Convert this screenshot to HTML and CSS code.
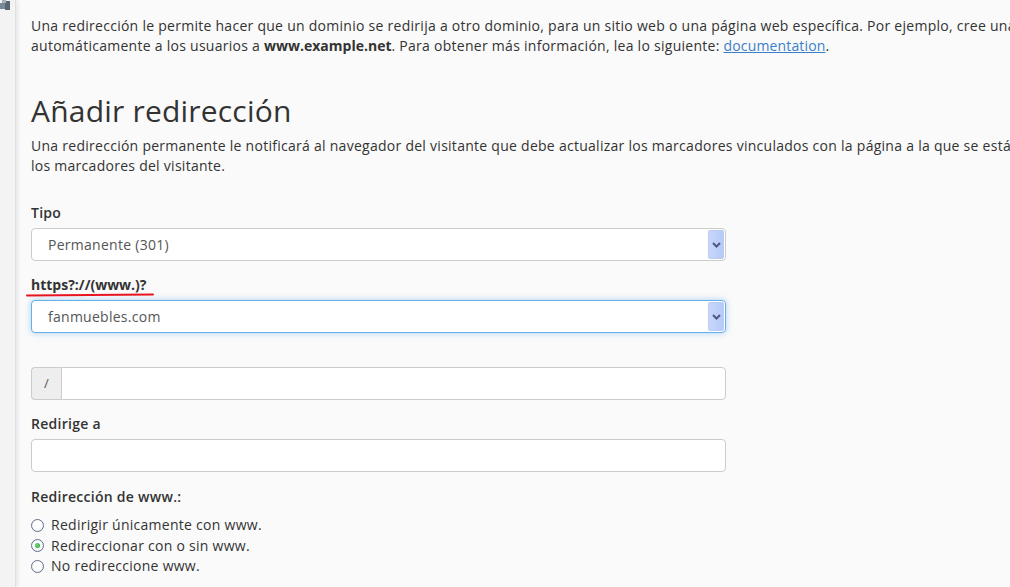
FILE: index.html
```html
<!DOCTYPE html>
<html lang="es">
<head>
<meta charset="utf-8">
<title>Añadir redirección</title>
<link rel="stylesheet" href="styles.css">
</head>
<body>
<div class="layout">
  <aside class="sidebar">
    <svg class="side-icon" width="12" height="12" viewBox="0 0 12 12"><rect x="0" y="3" width="5" height="6" fill="#7b8a99"/><rect x="5" y="1" width="5" height="9" fill="#5b6673"/><rect x="2" y="0" width="4" height="3" fill="#a4b0bc"/></svg>
  </aside>
  <main class="content">
    <p class="intro">Una redirección le permite hacer que un dominio se redirija a otro dominio, para un sitio web o una página web específica. Por ejemplo, cree una redirección para que www.example.com redirija<br>automáticamente a los usuarios a <b>www.example.net</b>. Para obtener más información, lea lo siguiente: <a href="#">documentation</a>.</p>

    <h2 class="title">Añadir redirección</h2>
    <p class="desc">Una redirección permanente le notificará al navegador del visitante que debe actualizar los marcadores vinculados con la página a la que se está redirigiendo. Una redirección temporal no actualizará<br>los marcadores del visitante.</p>

    <label class="lbl lbl-first">Tipo</label>
    <div class="select">
      <span class="select-text">Permanente (301)</span>
      <span class="select-btn"><svg width="9" height="6" viewBox="0 0 9 6"><path d="M1 1 L4.5 4.5 L8 1" fill="none" stroke="#4a5b7d" stroke-width="2"/></svg></span>
    </div>

    <label class="lbl lbl-marked">https?://(www.)?<span class="redline"></span></label>
    <div class="select focused">
      <span class="select-text">fanmuebles.com</span>
      <span class="select-btn"><svg width="9" height="6" viewBox="0 0 9 6"><path d="M1 1 L4.5 4.5 L8 1" fill="none" stroke="#4a5b7d" stroke-width="2"/></svg></span>
    </div>

    <div class="input-group">
      <span class="addon">/</span>
      <span class="field"></span>
    </div>

    <label class="lbl">Redirige a</label>
    <div class="input"></div>

    <label class="lbl lbl-www">Redirección de www.:</label>
    <ul class="radios">
      <li><span class="radio"></span>Redirigir únicamente con www.</li>
      <li><span class="radio checked"></span>Redireccionar con o sin www.</li>
      <li><span class="radio"></span>No redireccione www.</li>
    </ul>
  </main>
</div>
</body>
</html>
```

FILE: styles.css
```css
html, body {
  margin: 0;
  padding: 0;
  height: 100%;
  overflow: hidden;
  background: #fafafa;
  font-family: "Open Sans", "Liberation Sans", sans-serif;
  font-size: 14px;
  letter-spacing: 0.27px;
  color: #333;
}

.layout {
  display: flex;
  height: 100%;
}

.sidebar {
  width: 15px;
  flex: 0 0 15px;
  background: #f3f3f3;
  border-right: 1px solid #e0e0e0;
  box-shadow: 2px 0 4px rgba(0, 0, 0, 0.08);
  position: relative;
  z-index: 1;
}

.side-icon {
  display: block;
}

.content {
  flex: 1;
  min-width: 0;
  padding-left: 15px;
  white-space: nowrap;
  overflow: hidden;
}

.intro {
  margin: 16px 0 0;
  line-height: 20px;
}

.intro b {
  font-weight: 700;
  letter-spacing: 0;
}

.intro a {
  color: #3a80c8;
  text-decoration: underline;
  letter-spacing: 0.15px;
}

.title {
  margin: 37px 0 0;
  font-size: 30px;
  line-height: 36px;
  font-weight: 400;
  letter-spacing: 0.2px;
  color: #333;
}

.desc {
  margin: 7px 0 0;
  line-height: 20px;
}

.lbl {
  display: block;
  margin-top: 14px;
  margin-bottom: 5px;
  line-height: 20px;
  font-weight: 600;
  position: relative;
  width: max-content;
}

.lbl-first {
  margin-top: 27px;
}

.lbl-marked {
  font-weight: 700;
  letter-spacing: 0;
}

.redline {
  position: absolute;
  left: -5px;
  right: -7px;
  bottom: -1px;
  height: 2px;
  background: #e8141e;
  border-radius: 1px;
  transform: rotate(-0.4deg);
}

.select {
  width: 693px;
  height: 31px;
  border: 1px solid #ccc;
  border-radius: 4px;
  background: #fff;
  display: flex;
  align-items: stretch;
  justify-content: space-between;
}

.select.focused {
  border-color: #66afe9;
  box-shadow: 0 0 6px rgba(102, 175, 233, 0.55);
}

.select-text {
  padding-left: 16px;
  line-height: 31px;
  color: #555;
}

.select-btn {
  width: 14px;
  margin: 1px 1px 1px 0;
  border: 1px solid #bccbf0;
  border-radius: 2px;
  background: linear-gradient(to right, #c8d6fb, #b6c9f8);
  display: flex;
  align-items: center;
  justify-content: center;
}

.input-group {
  margin-top: 34px;
  width: 695px;
  height: 33px;
  display: flex;
}

.addon {
  width: 30px;
  flex: 0 0 30px;
  box-sizing: border-box;
  border: 1px solid #ccc;
  border-right: none;
  border-radius: 4px 0 0 4px;
  background: #eee;
  color: #555;
  text-align: center;
  line-height: 31px;
  font-size: 13px;
}

.field {
  flex: 1;
  border: 1px solid #ccc;
  border-radius: 0 4px 4px 0;
  background: #fff;
}

.input {
  width: 695px;
  height: 33px;
  box-sizing: border-box;
  border: 1px solid #ccc;
  border-radius: 4px;
  background: #fff;
}

.lbl-www {
  margin-top: 15px;
  margin-bottom: 8px;
}

.radios {
  list-style: none;
  margin: 0;
  padding: 0;
}

.radios li {
  display: flex;
  align-items: center;
  line-height: 20.5px;
  height: 20.5px;
}

.radio {
  width: 11px;
  height: 11px;
  border: 1px solid #62718a;
  border-radius: 50%;
  background: radial-gradient(circle at 50% 40%, #ffffff 40%, #e4e8ee 100%);
  margin-right: 7px;
  display: flex;
  align-items: center;
  justify-content: center;
  flex: 0 0 auto;
}

.radio.checked::after {
  content: "";
  width: 5px;
  height: 5px;
  border-radius: 50%;
  background: radial-gradient(circle at 40% 40%, #6fdc72, #1e9a3a);
}
```
